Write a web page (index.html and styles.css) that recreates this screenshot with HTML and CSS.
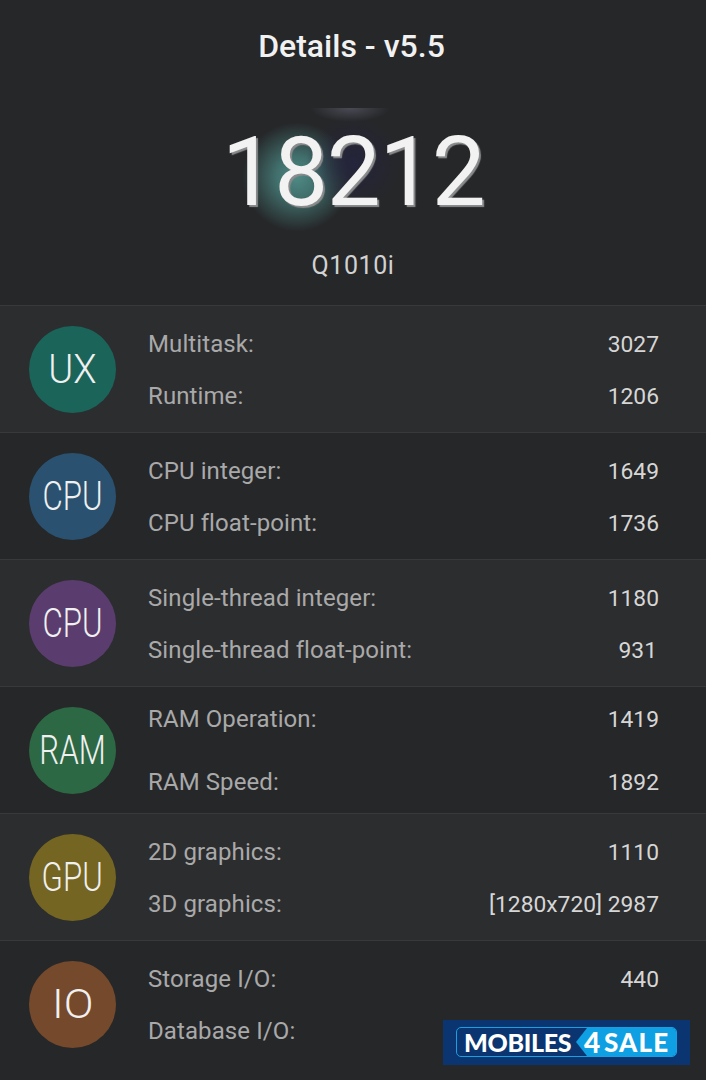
FILE: index.html
```html
<!DOCTYPE html>
<html lang="en">
<head>
    <meta charset="UTF-8">
    <meta name="viewport" content="width=device-width, initial-scale=1.0">
    <title>Details - v5.5</title>
    <link rel="stylesheet" href="styles.css">
</head>
<body>
    <div class="screen">
        <h1 class="title">Details - v5.5</h1>

        <div class="summary">
            <div class="score-wrap">
                <div class="glow glow-top"></div>
                <div class="glow glow-teal"></div>
                <div class="glow glow-navy"></div>
                <div class="score">18212</div>
            </div>
            <div class="device">Q1010i</div>
        </div>

        <div class="section light">
            <div class="badge ux"><span>UX</span></div>
            <div class="rows">
                <div class="row"><span>Multitask:</span><span class="value">3027</span></div>
                <div class="row"><span>Runtime:</span><span class="value">1206</span></div>
            </div>
        </div>

        <div class="section">
            <div class="badge cpu"><span>CPU</span></div>
            <div class="rows">
                <div class="row"><span>CPU integer:</span><span class="value">1649</span></div>
                <div class="row"><span>CPU float-point:</span><span class="value">1736</span></div>
            </div>
        </div>

        <div class="section light">
            <div class="badge cpu2"><span>CPU</span></div>
            <div class="rows">
                <div class="row"><span>Single-thread integer:</span><span class="value">1180</span></div>
                <div class="row"><span>Single-thread float-point:</span><span class="value short">931</span></div>
            </div>
        </div>

        <div class="section">
            <div class="badge ram"><span>RAM</span></div>
            <div class="rows wide">
                <div class="row"><span>RAM Operation:</span><span class="value">1419</span></div>
                <div class="row"><span>RAM Speed:</span><span class="value">1892</span></div>
            </div>
        </div>

        <div class="section light">
            <div class="badge gpu"><span>GPU</span></div>
            <div class="rows">
                <div class="row"><span>2D graphics:</span><span class="value">1110</span></div>
                <div class="row"><span>3D graphics:</span><span class="value">[1280x720] 2987</span></div>
            </div>
        </div>

        <div class="section">
            <div class="badge io"><span>IO</span></div>
            <div class="rows">
                <div class="row"><span>Storage I/O:</span><span class="value">440</span></div>
                <div class="row"><span>Database I/O:</span></div>
            </div>
        </div>

        <div class="watermark">
            <div class="mark">
                <span class="mark-left">MOBILES</span>
                <span class="mark-right"><span class="mark-four">4</span>SALE</span>
            </div>
        </div>
    </div>
</body>
</html>
```

FILE: styles.css
```css
:root {
    --bg-dark: #262729;
    --bg-light: #2c2d2f;
    --line: #38393b;
    --text-dim: #a9a9a9;
    --text-value: #d6d6d6;
    --mark-blue: #0f9fe3;
}

* {
    margin: 0;
    padding: 0;
    box-sizing: border-box;
}

html, body {
    background: var(--bg-dark);
}

body {
    font-family: Roboto, sans-serif;
    overflow: hidden;
}

.screen {
    position: relative;
    width: 706px;
    height: 1080px;
    overflow: hidden;
}

.title {
    height: 94px;
    padding-right: 3px;
    line-height: 92px;
    text-align: center;
    font-size: 32px;
    font-weight: 500;
    color: #f1f1f1;
}

.summary {
    height: 211px;
    display: flex;
    flex-direction: column;
    align-items: center;
}

.score-wrap {
    position: relative;
    width: 340px;
    height: 140px;
    margin-top: 14px;
}

.score {
    position: relative;
    text-align: center;
    font-size: 96px;
    line-height: 128px;
    font-weight: 380;
    letter-spacing: -1.5px;
    color: #f2f2f2;
    text-shadow: 2px 2px 1px #8b8c8d;
}

.glow {
    position: absolute;
    border-radius: 50%;
}

.glow-top {
    left: 127px;
    top: 0;
    width: 80px;
    height: 14px;
    border-radius: 0 0 50% 50%;
    background: radial-gradient(ellipse at 50% 0, #4a4a55 0, rgba(74, 74, 85, 0) 70%);
}

.glow-teal {
    left: 59px;
    top: 14px;
    width: 110px;
    height: 110px;
    background: radial-gradient(circle, #4f8a85 0, #41706d 26%, rgba(50, 90, 88, 0) 70%);
}

.glow-navy {
    left: 120px;
    top: 10px;
    width: 100px;
    height: 90px;
    background: radial-gradient(circle, #24243c 0, rgba(36, 36, 60, 0) 70%);
}

.device {
    margin-top: 3px;
    font-size: 25px;
    line-height: 30px;
    letter-spacing: 0.6px;
    color: #d2d2d2;
}

.section {
    display: flex;
    height: 127px;
    padding: 20px 47px 0 29px;
    border-top: 1px solid var(--line);
    background: var(--bg-dark);
}

.section.light {
    background: var(--bg-light);
}

.badge {
    flex: none;
    width: 87px;
    height: 87px;
    border-radius: 50%;
    display: flex;
    align-items: center;
    justify-content: center;
    color: #f0f0f0;
    font-size: 40px;
    font-weight: 300;
}

.badge span {
    display: inline-block;
    transform: scaleX(0.78);
}

.ux { background: #1b6459; }
.cpu { background: #2a5270; }
.cpu2 { background: #5a3d6e; }
.ram { background: #2c6844; }
.gpu { background: #756522; }
.io { background: #75492b; }

.ux span { transform: scaleX(0.95); }
.io span { transform: scaleX(1.1); }

.rows {
    flex: 1;
    margin-left: 32px;
    display: flex;
    flex-direction: column;
    gap: 22px;
    padding-top: 3px;
}

.rows.wide {
    gap: 33px;
    padding-top: 0;
    margin-top: -3px;
}

.row {
    display: flex;
    justify-content: space-between;
    align-items: baseline;
    height: 30px;
    line-height: 30px;
    font-size: 24px;
    letter-spacing: 0.1px;
    color: var(--text-dim);
}

.value {
    color: var(--text-value);
    font-size: 22.8px;
    letter-spacing: 0;
}

.value.short {
    margin-right: 2px;
}

.watermark {
    position: absolute;
    left: 443px;
    top: 1020px;
    width: 247px;
    height: 45px;
    padding: 7px 13px;
    background: #0a3570;
}

.mark {
    display: flex;
    height: 30px;
    border: 1px solid #1a9fe0;
    border-radius: 5px;
    font-family: Lato, sans-serif;
    font-weight: 900;
    font-size: 25px;
    line-height: 28px;
    color: #ffffff;
}

.mark-left {
    flex: none;
    width: 130px;
    padding-left: 7px;
    letter-spacing: -0.3px;
    white-space: nowrap;
}

.mark-right {
    position: relative;
    flex: 1;
    display: flex;
    border-radius: 0 4px 4px 0;
    background: var(--mark-blue);
    font-size: 26px;
    letter-spacing: 1.2px;
    white-space: nowrap;
}

/* arrow notch on the left of the blue part */
.mark-right::before {
    content: "";
    position: absolute;
    left: -11px;
    top: 0;
    border-right: 11px solid var(--mark-blue);
    border-top: 14px solid transparent;
    border-bottom: 14px solid transparent;
}

.mark-four {
    position: relative;
    width: 20px;
    margin-left: -3px;
    font-size: 28px;
}
```
